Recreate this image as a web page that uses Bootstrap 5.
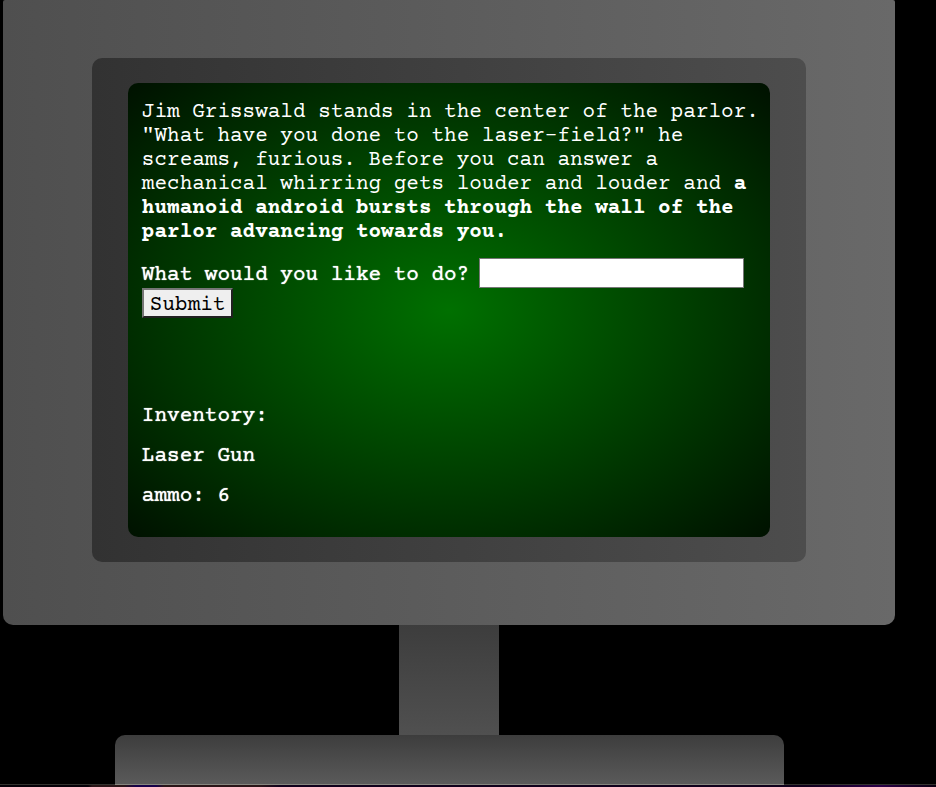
<!DOCTYPE html>
<html lang="en">
<head>
<meta charset="utf-8">
<meta name="viewport" content="width=device-width, initial-scale=1">
<title>Adventure Terminal</title>
<link href="https://cdn.jsdelivr.net/npm/bootstrap@5.3.0/dist/css/bootstrap.min.css" rel="stylesheet">
<style>
  body {
    background: #000;
    color: #fff;
    font-family: "Courier Prime", "Liberation Mono", "Courier New", monospace;
    font-size: 21px;
    line-height: 24px;
  }
  .computer { padding: 0 41px 0 3px; }
  .monitor {
    padding: 58px 10% 63px;
    border-radius: 2px 2px 10px 10px;
    background: linear-gradient(to right, #4f4f4f, #696969);
  }
  .bezel {
    padding: 25px 5%;
    border-radius: 10px;
    background: linear-gradient(to right, #323232, #4d4d4d);
  }
  .screen {
    padding: 18px 8px 12px 14px;
    border-radius: 10px;
    background: radial-gradient(#007000, #001100);
  }
  .story { margin-bottom: 13px; }
  .glow { text-shadow: 0 0 1px #fff; }
  .command-row { column-gap: 10px; }
  .command-label { padding-top: 6px; }
  .command-input {
    width: 265px;
    height: 30px;
    padding: 1px 2px;
    border: 1px solid #767676;
    border-radius: 0;
    background: #fff;
  }
  .command-submit {
    height: 30px;
    padding: 4px 6px 0;
    border: 2px solid;
    border-color: #767676 #212121 #212121 #767676;
    border-radius: 0;
    background: #efefef;
    color: #000;
  }
  .inventory { padding-top: 87px; }
  .neck {
    width: 100px;
    height: 110px;
    background: linear-gradient(#3d3d3d, #505050);
  }
  .base-row {
    padding: 0 41px 0 3px;
    background: linear-gradient(to top, #33332e 1px, #000 1px);
  }
  .base {
    border-radius: 10px 10px 0 0;
    border-bottom: 1px solid #86867e;
    background: linear-gradient(#3d3d3d, #5a5a5a);
  }
  .desk-edge {
    height: 2px;
    background: linear-gradient(to right, #050008 88px, #2a1518 92px, #2a1518 124px, #16004a 136px, #16004a 156px, #2a1518 164px, #2a1518 260px, #10001c 280px, #10001c 86%, #2b0048 94%, #0a0010);
  }
</style>
<script src="https://cdn.jsdelivr.net/npm/bootstrap@5.3.0/dist/js/bootstrap.bundle.min.js" defer></script>
</head>
<body>
<div class="d-flex flex-column min-vh-100">
  <main class="computer">
    <div class="monitor">
      <div class="bezel">
        <div class="screen">
          <p class="story">Jim Grisswald stands in the center of the parlor. "What have you done to the laser-field?" he screams, furious. Before you can answer a mechanical whirring gets louder and louder and <strong>a humanoid android bursts through the wall of the parlor advancing towards you.</strong></p>
          <form>
            <div class="command-row d-flex flex-wrap align-items-center">
              <label for="command" class="command-label glow">What would you like to do?</label>
              <input id="command" class="command-input" type="text" autocomplete="off">
            </div>
            <button class="command-submit d-block" type="button">Submit</button>
          </form>
          <section class="inventory glow">
            <p class="mb-3">Inventory:</p>
            <p class="mb-3">Laser Gun</p>
            <p class="mb-3">ammo: 6</p>
          </section>
        </div>
      </div>
    </div>
    <div class="neck mx-auto"></div>
  </main>
  <div class="base-row d-flex flex-grow-1 justify-content-center">
    <div class="base w-75"></div>
  </div>
  <div class="desk-edge"></div>
</div>
</body>
</html>
